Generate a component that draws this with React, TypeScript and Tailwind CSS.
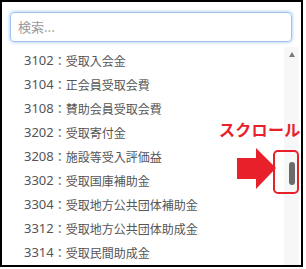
import React from 'react'

const items = [
  ['3102', '受取入会金'],
  ['3104', '正会員受取会費'],
  ['3108', '賛助会員受取会費'],
  ['3202', '受取寄付金'],
  ['3208', '施設等受入評価益'],
  ['3302', '受取国庫補助金'],
  ['3304', '受取地方公共団体補助金'],
  ['3312', '受取地方公共団体助成金'],
  ['3314', '受取民間助成金'],
]

export default function App() {
  return (
    <div className="w-[306px] h-[269px] bg-white" style={{ fontFamily: '"Noto Sans CJK JP", "Noto Sans", sans-serif' }}>
      <div className="relative w-[303px] h-[267px] border-2 border-black flex flex-col">
        {/* search box */}
        <div className="pl-[8px] pr-[9px] pt-[10px]">
          <div className="h-[30px] rounded-[4px] border border-[#9ec3ef] shadow-[0_0_3px_1px_rgba(120,170,240,0.45)] flex items-center px-[7px]">
            <input
              className="w-full outline-none text-[13px] text-[#555] placeholder:text-[#9a9a9a] bg-transparent"
              placeholder="検索..."
            />
          </div>
        </div>

        {/* list + scrollbar */}
        <div className="flex flex-1 mt-[5px] mb-[2px] pr-[2px]">
          <ul className="flex-1 pl-[22px] pt-[2px] overflow-hidden">
            {items.map(([code, name]) => (
              <li key={code} className="h-[24px] flex items-center text-[12px] text-[#555] whitespace-nowrap">
                <span className="text-[13px] font-['Noto_Sans',sans-serif]">{code}</span>
                <span>：{name}</span>
              </li>
            ))}
          </ul>
          <div className="w-[15px] bg-[#f7f7f7] flex flex-col items-center">
            <div className="mt-[5px] w-0 h-0 border-l-[3px] border-r-[3px] border-b-[5px] border-l-transparent border-r-transparent border-b-[#7a7a7a]" />
            <div className="mt-[105px] w-[6px] h-[23px] rounded-full bg-[#6b6b6b]" />
          </div>
        </div>

        {/* annotation */}
        <div className="absolute left-[217px] top-[119px] text-[16px] font-bold text-[#e8202a] leading-none tracking-[0.3px]">
          スクロール
        </div>
        <svg className="absolute left-[233px] top-[144px]" width="46" height="48" viewBox="0 0 46 48">
          <polygon points="2,12 21,12 21,2 41,22 21,43 21,33 2,33" fill="#e8202a" />
        </svg>
        <div className="absolute left-[271px] top-[148px] w-[26px] h-[44px] rounded-[5px] border-2 border-[#e8202a]" />
      </div>
    </div>
  )
}
